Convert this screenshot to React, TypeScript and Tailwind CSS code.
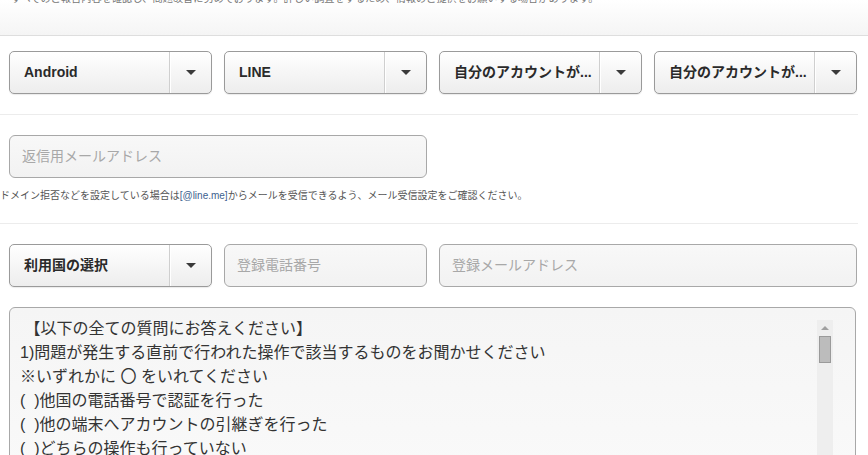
import React from "react";

const jp = { fontFamily: '"Liberation Sans", "Noto Sans CJK JP", sans-serif' };

function Select({ label }: { label: string }) {
  return (
    <div className="flex h-[43px] w-[203px] shrink-0 overflow-hidden rounded-[5px] border border-[#9a9a9a] bg-gradient-to-b from-white to-[#ededed] shadow-[0_1px_1px_rgba(0,0,0,0.08)]">
      <div className="flex min-w-0 flex-1 items-center whitespace-nowrap pl-[14px] text-[14px] font-bold text-[#2a2a2a]">
        {label}
      </div>
      <div className="flex w-[42px] items-center justify-center border-l border-[#cfcfcf] shadow-[inset_1px_0_0_#ffffff]">
        <div className="h-0 w-0 border-x-[5px] border-t-[5px] border-x-transparent border-t-[#3a3a3a]" />
      </div>
    </div>
  );
}

function Input({ placeholder, width }: { placeholder: string; width: string }) {
  return (
    <div
      className={`flex h-[43px] ${width} shrink-0 items-center rounded-[6px] border border-[#a8a8a8] bg-gradient-to-b from-[#f8f8f8] to-[#f2f2f2] pl-[12px] text-[14px] text-[#a8a8a8]`}
    >
      {placeholder}
    </div>
  );
}

export default function App() {
  const lines = [
    " 【以下の全ての質問にお答えください】",
    "1)問題が発生する直前で行われた操作で該当するものをお聞かせください",
    "※いずれかに 〇 をいれてください",
    "(  )他国の電話番号で認証を行った",
    "(  )他の端末へアカウントの引継ぎを行った",
    "(  )どちらの操作も行っていない",
    "",
  ];
  return (
    <div className="h-[455px] w-[868px] overflow-hidden bg-white" style={jp}>
      {/* header */}
      <div className="h-[36px] overflow-hidden border-b border-[#dedede] bg-gradient-to-b from-white to-[#f5f5f5]">
        <div className="mt-[-8px] whitespace-nowrap pl-[11px] text-[10.2px] leading-[14px] text-[#777]">
          すべてのご報告内容を確認し、問題改善に努めております。詳しい調査をするため、情報のご提供をお願いする場合があります。
        </div>
      </div>

      {/* row 1 */}
      <div className="mt-[15px] flex gap-[12px] pl-[9px]">
        <Select label="Android" />
        <Select label="LINE" />
        <Select label="自分のアカウントが..." />
        <Select label="自分のアカウントが..." />
      </div>

      <div className="mt-[20px] h-px w-[858px] bg-[#ececec]" />

      <div className="mt-[20px] pl-[9px]">
        <Input placeholder="返信用メールアドレス" width="w-[418px]" />
      </div>

      <div className="mt-[11px] whitespace-nowrap text-[10px] leading-[14px] text-[#555]">
        ドメイン拒否などを設定している場合は<span className="text-[#3d5f8f]">[@line.me]</span>からメールを受信できるよう、メール受信設定をご確認ください。
      </div>

      <div className="mt-[20px] h-px w-[858px] bg-[#ececec]" />

      {/* row 3 */}
      <div className="mt-[20px] flex gap-[12px] pl-[9px]">
        <Select label="利用国の選択" />
        <Input placeholder="登録電話番号" width="w-[203px]" />
        <Input placeholder="登録メールアドレス" width="w-[418px]" />
      </div>

      {/* textarea */}
      <div className="ml-[9px] mt-[20px] flex h-[200px] w-[847px] rounded-[6px] border border-[#a8a8a8] bg-gradient-to-b from-[#f5f5f5] to-[#fafafa]">
        <div className="flex-1 pl-[10px] pt-[9px] text-[16px] leading-[24px] text-[#333]">
          {lines.map((l, i) => (
            <div key={i} className="whitespace-pre">
              {l}
            </div>
          ))}
        </div>
        <div className="mr-[22px] mt-[12px] flex w-[16px] flex-col items-center bg-[#eeeeee]">
          <div className="mt-[6px] h-0 w-0 border-x-[4px] border-b-[4px] border-x-transparent border-b-[#a0a0a0]" />
          <div className="mt-[6px] h-[27px] w-[12px] border border-[#9a9a9a] bg-[#bcbcbc]" />
        </div>
      </div>
    </div>
  );
}
